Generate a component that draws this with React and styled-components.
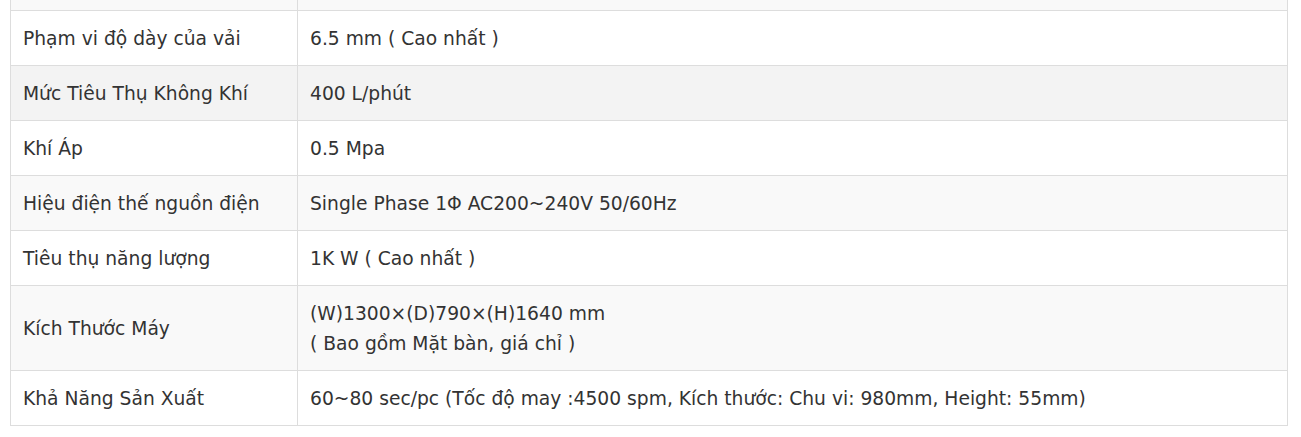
import React from 'react'
import styled, { createGlobalStyle } from 'styled-components'

const GlobalStyle = createGlobalStyle`
body {
  margin: 0;
  background: #fff;
  font-family: 'DejaVu Sans', Verdana, sans-serif;
}
`

const Page = styled.div`
padding: 0 10px;
height: 437px;
overflow: hidden;
`

const SpecTable = styled.table`
width: 1278px;
border-collapse: collapse;
color: #333;
font-size: 18.7px;
`

const Row = styled.tr`
background: ${p => p.tone || '#fff'};
`

const Cell = styled.td`
border: 1px solid #ddd;
padding: ${p => (p.cut ? '0' : '13px 12px 11px')};
height: ${p => (p.cut ? '10px' : 'auto')};
line-height: 30px;
vertical-align: middle;
border-top: ${p => (p.cut ? 'none' : '1px solid #ddd')};
`

const Label = styled(Cell)`
width: 262px;
`

const specs = [
  { label: 'Phạm vi độ dày của vải', value: ['6.5 mm ( Cao nhất )'] },
  { label: 'Mức Tiêu Thụ Không Khí', value: ['400 L/phút'], tone: '#f3f3f3' },
  { label: 'Khí Áp', value: ['0.5 Mpa'] },
  { label: 'Hiệu điện thế nguồn điện', value: ['Single Phase 1Φ AC200~240V 50/60Hz'], tone: '#f9f9f9' },
  { label: 'Tiêu thụ năng lượng', value: ['1K W ( Cao nhất )'] },
  {
    label: 'Kích Thước Máy',
    value: ['(W)1300×(D)790×(H)1640 mm', '( Bao gồm Mặt bàn, giá chỉ )'],
    tone: '#f9f9f9',
  },
  {
    label: 'Khả Năng Sản Xuất',
    value: ['60~80 sec/pc (Tốc độ may :4500 spm, Kích thước: Chu vi: 980mm, Height: 55mm)'],
  },
]

export default function App() {
  return (
    <Page>
      <GlobalStyle />
      <SpecTable>
        <tbody>
          <Row tone="#f9f9f9">
            <Label cut />
            <Cell cut />
          </Row>
          {specs.map(s => (
            <Row key={s.label} tone={s.tone}>
              <Label>{s.label}</Label>
              <Cell>
                {s.value.map((v, i) => (
                  <React.Fragment key={i}>
                    {i > 0 && <br />}
                    {v}
                  </React.Fragment>
                ))}
              </Cell>
            </Row>
          ))}
        </tbody>
      </SpecTable>
    </Page>
  )
}
